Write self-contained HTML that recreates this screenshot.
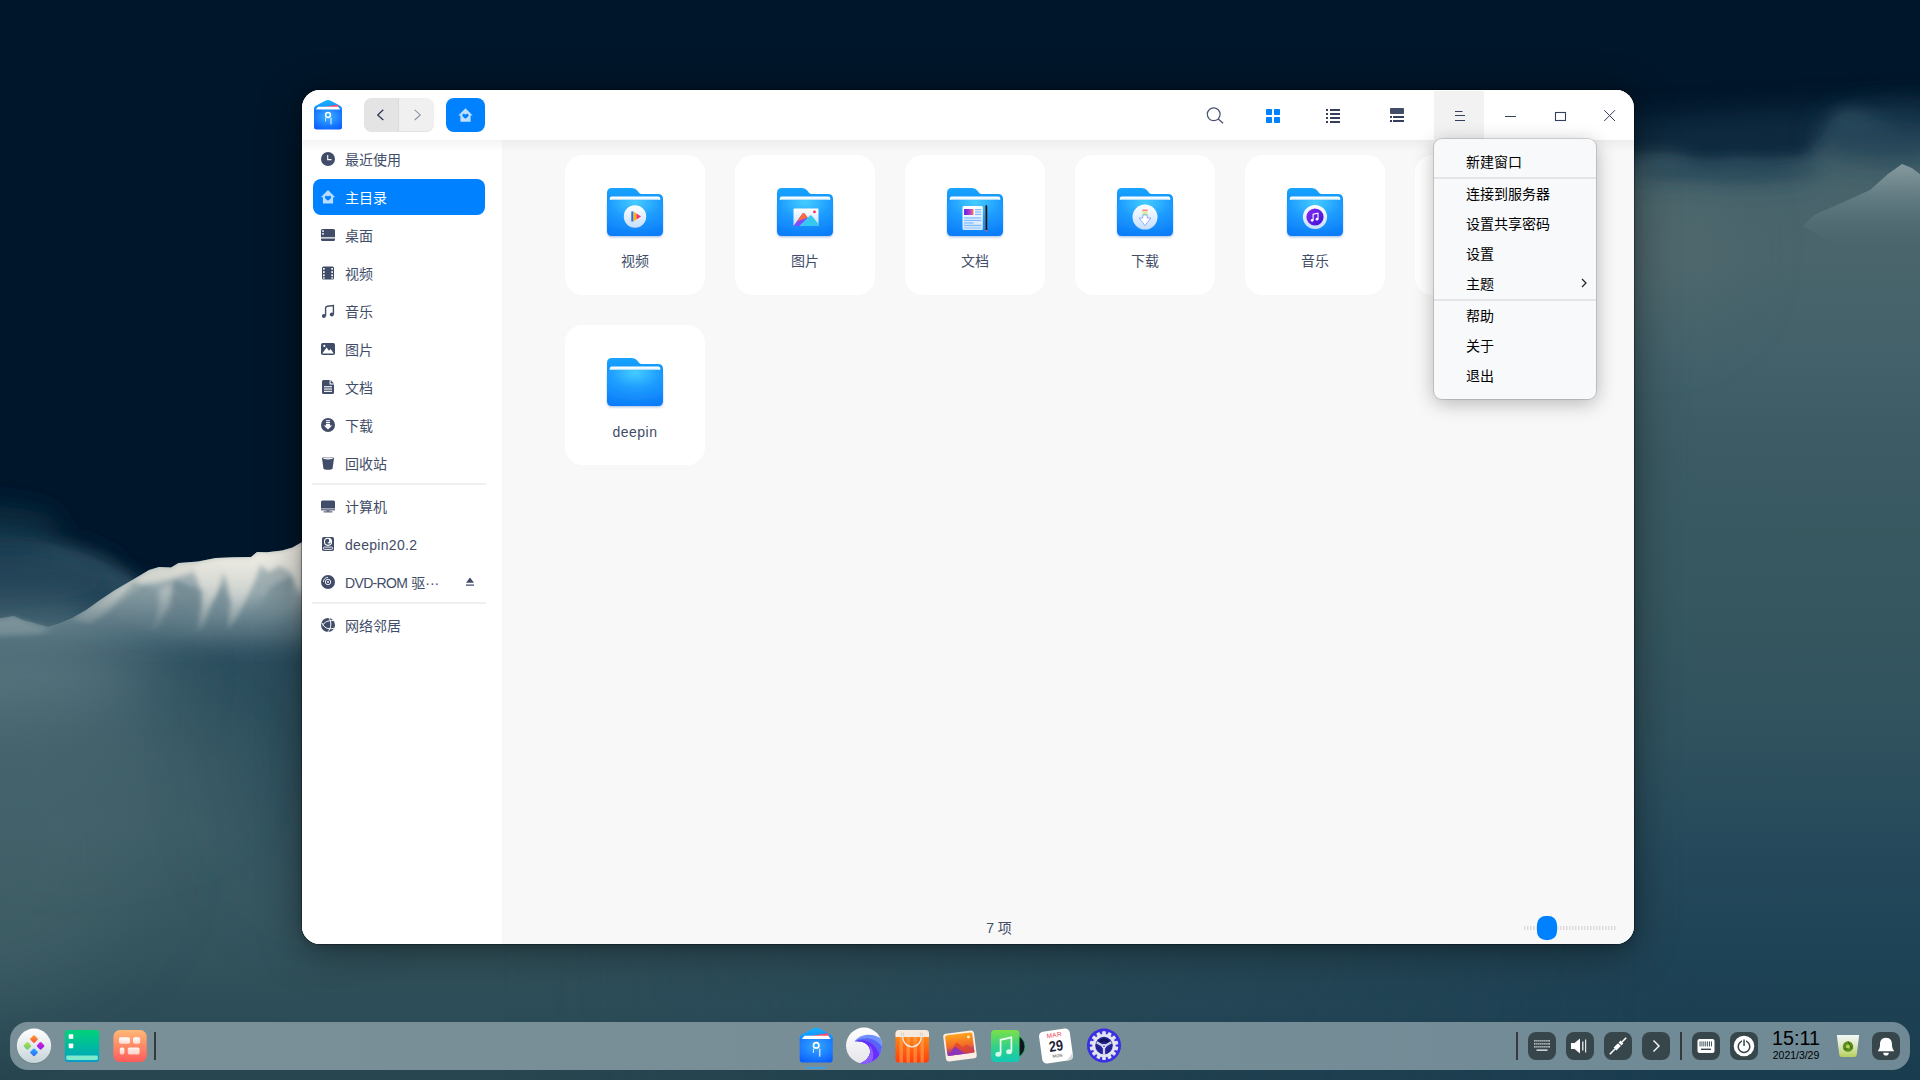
<!DOCTYPE html>
<html lang="zh-CN">
<head>
<meta charset="utf-8">
<title>文件管理器</title>
<style>
*{box-sizing:border-box;margin:0;padding:0}
html,body{width:1920px;height:1080px;overflow:hidden;background:#01152b}
body{font-family:"Liberation Sans","Noto Sans CJK SC",sans-serif;font-size:14px;color:#414d68;position:relative}
#wall{position:absolute;left:0;top:0;width:1920px;height:1080px}
#win{position:absolute;left:302px;top:90px;width:1332px;height:854px;border-radius:18px;background:#f8f8f8;overflow:hidden;}
#winshadow{position:absolute;left:302px;top:90px;width:1332px;height:854px;border-radius:18px;box-shadow:0 8px 44px rgba(0,0,0,.42),0 2px 10px rgba(0,0,0,.18),0 0 0 1px rgba(0,0,0,.3)}
#win:after{content:"";position:absolute;left:0;top:0;width:1332px;height:854px;border-radius:18px;border:1px solid rgba(255,255,255,.95);pointer-events:none}
#title{position:absolute;left:0;top:0;width:1332px;height:50px;background:#fff}
#side{position:absolute;left:0;top:50px;width:200px;height:804px;background:#fff}
#main{position:absolute;left:200px;top:50px;width:1132px;height:804px;background:#f8f8f8}
#topshade{position:absolute;left:0;top:50px;width:1332px;height:12px;background:linear-gradient(rgba(0,0,0,.045),rgba(0,0,0,0));pointer-events:none}
.abs{position:absolute}
/* sidebar */
.it{position:absolute;left:11px;width:172px;height:36px;border-radius:8px;line-height:38px;padding-left:32px;white-space:nowrap;font-size:14px}
.it svg{position:absolute;left:7px;top:10px;width:16px;height:16px}
.it.sel{background:#0081ff;color:#fff}
.sep{position:absolute;left:10px;width:174px;height:2px;background:#efefef}
/* cards */
.card{position:absolute;width:140px;height:140px;border-radius:18px;background:#fff}
.card .fold{position:absolute;left:40px;top:31px;width:60px;height:54px}
.card .nm{position:absolute;left:0;width:140px;top:95px;height:22px;line-height:22px;text-align:center;font-size:14px;color:#414d68}
/* menu */
#menu{position:absolute;left:1434px;top:139px;width:162px;height:260px;border-radius:8px;background:#f8f9fb;box-shadow:0 4px 20px rgba(0,0,0,.28),0 0 0 1px rgba(0,0,0,.13);padding-top:8px;color:#000}
#menu .mi{height:30px;line-height:30px;padding-left:32px;font-size:14px;position:relative}
#menu .ms{height:2px;background:#e4e5e8}
/* dock */
#dock{position:absolute;left:10px;top:1022px;width:1900px;height:48px;border-radius:18px;background:linear-gradient(90deg,#7a9098 0%,#778e97 45%,#6f8a96 100%)}
.tray{position:absolute;top:10px;width:28px;height:28px;border-radius:8px;background:#37464b}
.dsep{position:absolute;top:10px;width:2px;height:28px;background:#333c40}
</style>
</head>
<body>
<svg id="wall" width="1920" height="1080" viewBox="0 0 1920 1080">
<defs>
<linearGradient id="wfl" x1="0" y1="0" x2="0" y2="1080" gradientUnits="userSpaceOnUse">
<stop offset="0" stop-color="#2c4c5a"/><stop offset=".55" stop-color="#37596a"/><stop offset=".593" stop-color="#2d4f5f"/><stop offset=".648" stop-color="#30525f"/><stop offset=".704" stop-color="#375862"/><stop offset=".769" stop-color="#3c5c65"/><stop offset=".833" stop-color="#385861"/><stop offset=".889" stop-color="#32525c"/><stop offset=".944" stop-color="#2c4c57"/><stop offset="1" stop-color="#27454f"/>
</linearGradient>
<linearGradient id="wfr" x1="0" y1="0" x2="0" y2="1080" gradientUnits="userSpaceOnUse">
<stop offset=".12" stop-color="#47636b"/><stop offset=".24" stop-color="#4a656c"/><stop offset=".33" stop-color="#43616a"/><stop offset=".42" stop-color="#3b5a63"/><stop offset=".56" stop-color="#36575f"/><stop offset=".69" stop-color="#2f515e"/><stop offset=".79" stop-color="#25495b"/><stop offset=".88" stop-color="#1f4356"/><stop offset="1" stop-color="#1a3c4f"/>
</linearGradient>
<linearGradient id="wmx" x1="500" y1="0" x2="1700" y2="0" gradientUnits="userSpaceOnUse">
<stop offset="0" stop-color="#fff" stop-opacity="0"/><stop offset="1" stop-color="#fff" stop-opacity="1"/>
</linearGradient>
<mask id="wmk" maskUnits="userSpaceOnUse" x="0" y="0" width="1920" height="1080"><rect width="1920" height="1080" fill="url(#wmx)"/></mask>
<linearGradient id="wsnow" x1="0" y1="545" x2="0" y2="665" gradientUnits="userSpaceOnUse">
<stop offset="0" stop-color="#c4cccb"/><stop offset=".4" stop-color="#a0b1b5" stop-opacity=".92"/><stop offset=".75" stop-color="#6a8590" stop-opacity=".55"/><stop offset="1" stop-color="#37596a" stop-opacity="0"/>
</linearGradient>
<linearGradient id="wsnowh" x1="90" y1="0" x2="230" y2="0" gradientUnits="userSpaceOnUse">
<stop offset="0" stop-color="#f3f0e6" stop-opacity="0"/><stop offset=".5" stop-color="#f3f0e6" stop-opacity=".85"/><stop offset="1" stop-color="#f6f3ea" stop-opacity="1"/>
</linearGradient>
<linearGradient id="wsnowv" x1="0" y1="545" x2="0" y2="640" gradientUnits="userSpaceOnUse">
<stop offset="0" stop-color="#fff"/><stop offset=".4" stop-color="#fff" stop-opacity=".7"/><stop offset="1" stop-color="#fff" stop-opacity="0"/>
</linearGradient>
<mask id="wmk2" maskUnits="userSpaceOnUse" x="0" y="500" width="320" height="220"><rect x="0" y="500" width="320" height="220" fill="url(#wsnowv)"/></mask>
<linearGradient id="wsnow2" x1="0" y1="160" x2="0" y2="260" gradientUnits="userSpaceOnUse">
<stop offset="0" stop-color="#c2cdce"/><stop offset=".35" stop-color="#7f969d" stop-opacity=".85"/><stop offset="1" stop-color="#4a666f" stop-opacity="0"/>
</linearGradient>
<filter id="wb40" filterUnits="userSpaceOnUse" x="-300" y="-300" width="2600" height="1700"><feGaussianBlur stdDeviation="40"/></filter>
<filter id="wb18" filterUnits="userSpaceOnUse" x="-300" y="-300" width="2600" height="1700"><feGaussianBlur stdDeviation="14"/></filter>
<filter id="wb8" filterUnits="userSpaceOnUse" x="-300" y="-300" width="2600" height="1700"><feGaussianBlur stdDeviation="7"/></filter>
<filter id="wb3" filterUnits="userSpaceOnUse" x="-300" y="-300" width="2600" height="1700"><feGaussianBlur stdDeviation="2.5"/></filter>
<filter id="wb1" filterUnits="userSpaceOnUse" x="-300" y="-300" width="2600" height="1700"><feGaussianBlur stdDeviation=".7"/></filter>
<clipPath id="wcp"><path d="M-5 619 L8 617 L14 616 L22 620 L34 623 L48 627 L60 623 L72 618 L86 610 L100 600 L115 590 L134 579 L149 570 L159 567 L171 567.500 L178.500 563 L198 561.500 L215.500 558 L233 557.300 L251 557 L257 552 L267 552.300 L282 550.400 L292.500 547.400 L303 541.500 L303 720 L-5 720Z"/></clipPath>
</defs>
<rect width="1920" height="1080" fill="url(#wfl)"/>
<rect width="1920" height="1080" fill="url(#wfr)" mask="url(#wmk)"/>
<!-- left light patch -->
<ellipse cx="-30" cy="850" rx="170" ry="150" fill="#44646b" filter="url(#wb40)" opacity=".6"/>
<ellipse cx="320" cy="740" rx="90" ry="170" fill="#27485a" filter="url(#wb40)" opacity=".5"/>
<ellipse cx="1660" cy="250" rx="60" ry="70" fill="#566d70" filter="url(#wb40)" opacity=".5"/>
<!-- sky -->
<path filter="url(#wb8)" d="M-200 -200 L2120 -200 L2120 95 C1960 120 1930 135 1898 128 C1880 120 1860 108 1840 112 C1822 130 1818 150 1800 156 C1776 160 1750 160 1737 157 C1715 162 1700 160 1690 158 C1670 148 1650 150 1600 160 L330 560 L175 612 C120 565 70 520 -200 525Z" fill="#01152b"/>
<!-- bluish transition under sky edge on right -->
<path filter="url(#wb18)" d="M1600 175 C1660 165 1700 180 1740 178 C1780 180 1810 175 1830 150 C1850 130 1880 135 1900 145 L1940 140 L1940 100 L1600 120Z" fill="#1b3d52" opacity=".5"/>
<ellipse cx="1890" cy="135" rx="75" ry="28" fill="#1b3d52" filter="url(#wb18)" opacity=".75"/>
<ellipse cx="1730" cy="172" rx="90" ry="10" fill="#1d3f54" filter="url(#wb8)" opacity=".5"/>
<!-- left dark wispy clouds -->
<g filter="url(#wb18)">
<ellipse cx="10" cy="580" rx="110" ry="36" fill="#1b3e52" opacity=".95"/>
<ellipse cx="130" cy="610" rx="55" ry="20" fill="#12344a" opacity=".9"/>
<ellipse cx="-10" cy="528" rx="70" ry="22" fill="#113247" opacity=".8"/>
</g>
<!-- left mountain -->
<path filter="url(#wb1)" d="M-5 619 L8 617 L14 616 L22 620 L34 623 L48 627 L60 623 L72 618 L86 610 L100 600 L115 590 L134 579 L149 570 L159 567 L171 567.500 L178.500 563 L198 561.500 L215.500 558 L233 557.300 L251 557 L257 552 L267 552.300 L282 550.400 L292.500 547.400 L303 541.500 L303 700 L-5 700Z" fill="url(#wsnow)"/>
<g mask="url(#wmk2)" clip-path="url(#wcp)">
<g filter="url(#wb3)">
<path d="M72 619 L100 600 L134 579 L149 570 L159 567 L171 567.500 L178.500 563 L198 561.500 L194 572 L176 578 L160 582 L146 584 L128 596 L108 612 L90 624Z" fill="#e4e2d8"/>
<path d="M198 561.500 L215.500 558 L223 572 L220 590 L211 606 L203 628 L196 634 L201 606 L199 584 L194 572Z" fill="#efece2"/>
<path d="M215.500 558 L233 557.300 L251 557 L257 552 L264 556 L256 578 L246 600 L236 620 L226 632 L231 604 L227 582 L223 572Z" fill="#f1eee4"/>
<path d="M257 552 L267 552.300 L282 550.400 L292.500 547.400 L303 541.500 L303 596 L297 588 L290 572 L280 566 L268 572 L262 566Z" fill="#f3f0e6"/>
<path d="M160 590 L172 584 L170 604 L158 628 L150 634 L158 608Z" fill="#c9cfcc" opacity=".8"/>
</g></g>
<g mask="url(#wmk2)" clip-path="url(#wcp)"><g filter="url(#wb3)" opacity=".85">
<path d="M134 582 L157 591 L152 634 L106 612Z" fill="#6f8993"/>
<path d="M174 580 L203 591 L196 640 L170 626Z" fill="#5b7783"/>
<path d="M221 584 L228 598 L221 626 L211 612Z" fill="#67828c"/>
<path d="M270 588 L292 576 L294 600 L248 634Z" fill="#6c868f"/>
</g></g>
<path filter="url(#wb3)" d="M-5 621 L14 617.500 L34 624 L48 628 L60 625 L40 634 L-5 636Z" fill="#aab8b8" opacity=".55"/>
<ellipse cx="10" cy="675" rx="150" ry="50" fill="#67838c" filter="url(#wb40)" opacity=".8"/>
<ellipse cx="60" cy="770" rx="160" ry="60" fill="#46656f" filter="url(#wb40)" opacity=".6"/>
<!-- right peak -->
<path filter="url(#wb1)" d="M1803 226 L1814 215 L1848 200 L1870 190 L1888 174 L1902 164 L1912 168 L1925 178 L1925 300 Z" fill="url(#wsnow2)" opacity=".6"/>
</svg>

<div id="winshadow"></div>
<div id="win">
<div id="title"><!--TITLE-->
<svg class="abs" style="left:11px;top:8.600px" width="30" height="32" viewBox="0 0 30 32">
<defs><radialGradient id="ag" cx=".5" cy=".35" r=".75"><stop offset="0" stop-color="#3fb4ff"/><stop offset=".6" stop-color="#1a7dff"/><stop offset="1" stop-color="#0a5cff"/></radialGradient>
<linearGradient id="ag2" x1="0" y1="0" x2="0" y2="1"><stop offset="0" stop-color="#18b2ff"/><stop offset="1" stop-color="#1386ff"/></linearGradient></defs>
<path d="M1 9.500 Q1 7.600 2.800 6.700 L12.200 1.700 Q15 .3 17.800 1.700 L27.200 6.700 Q29 7.600 29 9.500 L29 12 L1 12Z" fill="url(#ag2)"/>
<path d="M3.200 9.400 L23.800 5.800 Q24.800 5.700 25.200 6.600 L26.300 9.400 Z" fill="#ff4a68"/>
<path d="M5 7.800 L25.200 7.800 L27.500 11 L2.600 11Z" fill="#fff"/>
<path d="M1 10.6 L29 10.6 L29 28 Q29 30.5 26.5 30.5 L3.500 30.5 Q1 30.500 1 28Z" fill="url(#ag)"/>
<circle cx="15" cy="16" r="2.4" fill="none" stroke="#fff" stroke-width="1.5"/>
<rect x="12.000" y="18.8" width="1" height="3.6" fill="#fff" opacity=".75"/><rect x="17.200" y="18.800" width="1.600" height="6.600" fill="#fff" opacity=".6"/>
</svg>
<div class="abs" style="left:62px;top:8px;width:70px;height:34px;border-radius:8px;background:#f0f0f0;overflow:hidden;box-shadow:inset 0 -1px 0 rgba(0,0,0,.06)">
<div class="abs" style="left:0;top:0;width:35px;height:34px;background:#e4e4e4;border-right:1px solid #dcdcdc"></div>
<svg class="abs" style="left:0;top:0" width="70" height="34" viewBox="0 0 70 34"><path d="M19.300 11.800 L13.700 16.900 L19.300 22" fill="none" stroke="#2f3a5a" stroke-width="1.300"/><path d="M50.700 11.800 L56.300 16.900 L50.700 22" fill="none" stroke="#8d94a8" stroke-width="1.100"/></svg>
</div>
<div class="abs" style="left:144px;top:8px;width:39px;height:34px;border-radius:8px;background:#0081ff">
<svg class="abs" style="left:10.500px;top:9px" width="17" height="16" viewBox="0 0 17 16"><path d="M8.500 1.200 L15.700 8.400 L13.600 8.400 L13.600 14.800 L3.400 14.800 L3.400 8.400 L1.300 8.400Z M8.500 11.700 C6.400 10.400 5.400 9.300 5.400 8.300 C5.400 6.800 7.300 6.300 8.500 7.700 C9.700 6.300 11.600 6.800 11.600 8.300 C11.600 9.300 10.600 10.400 8.500 11.700Z" fill="#bfdfff" fill-rule="evenodd"/></svg>
</div>
<svg class="abs" style="left:900px;top:14px" width="24" height="24" viewBox="0 0 24 24"><circle cx="11.700" cy="10.300" r="6.400" fill="none" stroke="#4a5570" stroke-width="1.200"/><path d="M16.200 14.900 L21.100 19.300" stroke="#4a5570" stroke-width="1.300" fill="none"/></svg>
<svg class="abs" style="left:964px;top:19px" width="14" height="14" viewBox="0 0 14 14" fill="#0081ff"><rect x="0" y="0" width="6" height="6" rx=".8"/><rect x="8" y="0" width="6" height="6" rx=".8"/><rect x="0" y="8" width="6" height="6" rx=".8"/><rect x="8" y="8" width="6" height="6" rx=".8"/></svg>
<svg class="abs" style="left:1024px;top:19px" width="14" height="14" viewBox="0 0 14 14" fill="#353f5c"><rect x="0" y="0" width="2" height="2"/><rect x="4" y="0" width="10" height="2"/><rect x="0" y="4" width="2" height="2"/><rect x="4" y="4" width="10" height="2"/><rect x="0" y="8" width="2" height="2"/><rect x="4" y="8" width="10" height="2"/><rect x="0" y="12" width="2" height="2"/><rect x="4" y="12" width="10" height="2"/></svg>
<svg class="abs" style="left:1088px;top:18px" width="14" height="14" viewBox="0 0 14 14" fill="#353f5c"><rect x="0" y="0" width="14" height="6" rx="1" fill="#414d68"/><rect x="0" y="8" width="2" height="2"/><rect x="3" y="8" width="11" height="2"/><rect x="0" y="12" width="2" height="2"/><rect x="3" y="12" width="11" height="2"/></svg>
<div class="abs" style="left:1132px;top:1px;width:50px;height:49px;background:#f2f2f2"></div>
<svg class="abs" style="left:1132px;top:0" width="200" height="50" viewBox="0 0 200 50" fill="none" stroke="#35405f" stroke-width="1.100">
<path d="M21 21.500 H28.500 M21 25.500 H31 M21 30.500 H31"/>
<path d="M71 26.500 H82"/>
<rect x="121.500" y="22.500" width="10" height="8"/>
<path d="M170.200 20.200 L181 31 M181 20.200 L170.200 31" stroke-width="1"/>
</svg>
<!--/TITLE--></div>
<div id="side"><!--SIDE--><div class="it" style="top:1px"><svg viewBox="0 0 16 16"><circle cx="8" cy="8" r="7" fill="#414d68"/><path d="M7.700 3.900 V8.600 H11.500" fill="none" stroke="#fff" stroke-width="1.100"/></svg>最近使用</div>
<div class="it sel" style="top:39px"><svg viewBox="0 0 16 16"><path d="M8 1 L15.200 8.200 L13.100 8.200 L13.100 14.600 L2.900 14.600 L2.900 8.200 L.8 8.200Z M8 11.600 C5.900 10.300 4.900 9.200 4.900 8.200 C4.900 6.700 6.800 6.200 8 7.600 C9.200 6.200 11.100 6.700 11.100 8.200 C11.100 9.200 10.100 10.300 8 11.600Z" fill="#b8dbff" fill-rule="evenodd"/></svg>主目录</div>
<div class="it" style="top:77px"><svg viewBox="0 0 16 16"><path d="M2.500 2 H13.500 Q15 2 15 3.500 V10.200 H1 V3.500 Q1 2 2.500 2Z" fill="#414d68"/><path d="M1 11.400 H15 V12.500 Q15 14 13.500 14 H2.500 Q1 14 1 12.500Z" fill="#414d68"/><rect x="2.200" y="3.300" width="1.600" height="1.600" fill="#fff"/><rect x="2.200" y="6" width="1.600" height="1.600" fill="#fff"/></svg>桌面</div>
<div class="it" style="top:115px"><svg viewBox="0 0 16 16"><rect x="2" y="1.500" width="12" height="13" rx="1.600" fill="#414d68"/><g fill="#fff"><rect x="3" y="3" width="1.700" height="1.700"/><rect x="3" y="6.200" width="1.700" height="1.700"/><rect x="3" y="9.400" width="1.700" height="1.700"/><rect x="3" y="12.300" width="1.700" height="1.300"/><rect x="11.300" y="3" width="1.700" height="1.700"/><rect x="11.300" y="6.200" width="1.700" height="1.700"/><rect x="11.300" y="9.400" width="1.700" height="1.700"/><rect x="11.300" y="12.300" width="1.700" height="1.300"/></g></svg>视频</div>
<div class="it" style="top:153px"><svg viewBox="0 0 16 16"><g transform="translate(0 1)"><path d="M5.600 11.800 V4.300 Q5.600 2.600 7.400 2.300 L13.400 1.600 V10.400" fill="none" stroke="#414d68" stroke-width="1.400"/><circle cx="3.900" cy="12" r="2" fill="#414d68"/><circle cx="11.800" cy="10.600" r="2" fill="#414d68"/></g></svg>音乐</div>
<div class="it" style="top:191px"><svg viewBox="0 0 16 16"><rect x="1" y="2" width="14" height="12" rx="1.800" fill="#414d68"/><path d="M2.300 12.500 L6.600 6.600 L9 9.700 L10.600 7.900 L13.800 12.500Z" fill="#fff"/><circle cx="4.300" cy="4.900" r="1.100" fill="#fff"/></svg>图片</div>
<div class="it" style="top:229px"><svg viewBox="0 0 16 16"><path d="M3.500 1 H9.600 V5.400 H14 V13.500 Q14 15 12.500 15 H3.500 Q2 15 2 13.500 V2.500 Q2 1 3.500 1Z M10.600 1 L14 4.400 H10.600Z" fill="#414d68"/><g fill="#fff"><rect x="4" y="7.200" width="8" height="1.100"/><rect x="4" y="9.500" width="8" height="1.100"/><rect x="4" y="11.800" width="8" height="1.100"/></g></svg>文档</div>
<div class="it" style="top:267px"><svg viewBox="0 0 16 16"><circle cx="8" cy="8" r="7" fill="#414d68"/><g fill="#fff"><rect x="6" y="3.200" width="4" height="1"/><rect x="6" y="5" width="4" height="1"/><path d="M6 6.800 H10 V8.400 H12.200 L8 12.400 L3.800 8.400 H6Z"/></g></svg>下载</div>
<div class="it" style="top:305px"><svg viewBox="0 0 16 16"><path d="M2 3.200 C2 1.500 14 1.500 14 3.200 L12.600 13.400 C12.400 15.300 3.600 15.300 3.400 13.400Z" fill="#414d68"/><ellipse cx="8" cy="3.300" rx="5" ry="1.100" fill="#fff" opacity=".9"/></svg>回收站</div>
<div class="it" style="top:348px"><svg viewBox="0 0 16 16"><path d="M2.500 2.500 H13.500 Q15 2.500 15 4 V10.500 H1 V4 Q1 2.500 2.500 2.500Z" fill="#414d68"/><rect x="1" y="11.300" width="14" height="1.100" fill="#414d68"/><rect x="6.300" y="12.400" width="3.400" height="1" fill="#414d68"/><rect x="3.600" y="13.400" width="8.800" height="1" fill="#414d68"/></svg>计算机</div>
<div class="it" style="top:386px"><svg viewBox="0 0 16 16"><rect x="2" y="1" width="12" height="14" rx="1.800" fill="#414d68"/><circle cx="8" cy="5.800" r="4.100" fill="#fff"/><path d="M8 2.800 A3 3 0 1 0 11 5.800 A2 2 0 0 1 7.300 6.500 A1.600 1.600 0 0 0 9.100 4.300 A1.800 1.800 0 0 0 8 2.800Z" fill="#414d68"/><rect x="3.400" y="11.100" width="9.200" height="2.300" rx="1.150" fill="none" stroke="#fff" stroke-width=".9"/></svg><span style="letter-spacing:.3px">deepin20.2</span></div>
<div class="it" style="top:424px"><svg viewBox="0 0 16 16"><circle cx="8" cy="8" r="7" fill="#414d68"/><circle cx="8" cy="8" r="2.700" fill="none" stroke="#fff" stroke-width=".9"/><circle cx="8" cy="8" r=".9" fill="#fff"/><path d="M3.400 8 A4.600 4.600 0 0 1 8 3.400" fill="none" stroke="#fff" stroke-width=".9"/></svg><span style="letter-spacing:-.65px">DVD-ROM</span> 驱···<svg style="left:151px;top:11.500px;width:12px;height:12px" viewBox="0 0 12 12"><path d="M6 1.500 L10 6.800 H2Z M2 8.600 H10 V9.800 H2Z" fill="#414d68"/></svg></div>
<div class="it" style="top:467px"><svg viewBox="0 0 16 16"><circle cx="8" cy="8" r="7" fill="#414d68"/><g fill="none" stroke="#fff" stroke-width="1"><path d="M2 5.800 C3.800 10.500 7.500 13 14.200 11.200"/><path d="M2.600 8.300 C4.500 5.200 7.500 3.300 13.600 3.600"/><path d="M9 1 C11.600 5 11.600 10.500 7.800 15"/></g></svg>网络邻居</div>
<div class="sep" style="top:343px"></div><div class="sep" style="top:462px"></div>
<!--/SIDE--></div>
<div id="main"><!--MAIN--><svg width="0" height="0" style="position:absolute"><defs>
<linearGradient id="fb" x1="0" y1="0" x2="0" y2="1"><stop offset="0" stop-color="#18a4ff"/><stop offset="1" stop-color="#0a82f5"/></linearGradient>
<linearGradient id="fw" x1="0" y1="0" x2="0" y2="1"><stop offset="0" stop-color="#ffffff"/><stop offset="1" stop-color="#a8dcff"/></linearGradient>
<radialGradient id="ff" cx=".5" cy=".08" r="1" gradientTransform="translate(0 0) scale(1 .95)"><stop offset="0" stop-color="#45ccff"/><stop offset=".45" stop-color="#1e9dff"/><stop offset="1" stop-color="#0a7cf8"/></radialGradient>
<linearGradient id="fe" x1="0" y1="0" x2="0" y2="1"><stop offset="0" stop-color="#ffffff"/><stop offset="1" stop-color="#c4dffc"/></linearGradient>
<linearGradient id="fd" x1="0" y1="0" x2="0" y2="1"><stop offset="0" stop-color="#ffffff"/><stop offset="1" stop-color="#cfe6ff"/></linearGradient>
<linearGradient id="fdi" x1="0" y1="0" x2="1" y2="0"><stop offset="0" stop-color="#5a1fe0"/><stop offset=".6" stop-color="#b03ad0"/><stop offset="1" stop-color="#ff7a5a"/></linearGradient>
<linearGradient id="fm" x1="0" y1="0" x2="1" y2="1"><stop offset="0" stop-color="#8a2cf0"/><stop offset="1" stop-color="#3a10d8"/></linearGradient>
<filter id="fs" x="-10%" y="-10%" width="120%" height="130%"><feDropShadow dx="0" dy="1.200" stdDeviation="1" flood-color="#0a4fb0" flood-opacity=".35"/></filter>
</defs></svg><div class="card" style="left:63px;top:15px"><svg class="fold" viewBox="0 0 60 54">
<path d="M2 7 Q2 2 7 2 L27 2 Q30.500 2 32.500 4.800 L34 6.800 Q35 8 37 8 L53 8 Q58 8 58 13 L58 30 L2 30Z" fill="url(#fb)"/>
<path d="M6.700 10.600 H53.300 Q55.300 10.600 55.300 12.600 V20 H4.700 V12.600 Q4.700 10.600 6.700 10.600Z" fill="url(#fw)"/>
<path d="M2 18.800 Q2 13.800 7 13.800 L53 13.800 Q58 13.800 58 18.800 L58 45 Q58 50 53 50 L7 50 Q2 50 2 45Z" fill="url(#ff)" filter="url(#fs)"/>
<circle cx="30" cy="30.500" r="11.200" fill="url(#fe)"/><path d="M26.300 25.600 H28.500 V35.400 H26.300Z" fill="#2a6cf2"/><path d="M28.500 25.700 L31.500 27.600 V33.400 L28.500 35.300Z" fill="#ffb400"/><path d="M31.500 27.600 L36 30.500 L31.500 33.400Z" fill="#ff2a68"/>
</svg><div class="nm">视频</div></div>
<div class="card" style="left:233px;top:15px"><svg class="fold" viewBox="0 0 60 54">
<path d="M2 7 Q2 2 7 2 L27 2 Q30.500 2 32.500 4.800 L34 6.800 Q35 8 37 8 L53 8 Q58 8 58 13 L58 30 L2 30Z" fill="url(#fb)"/>
<path d="M6.700 10.600 H53.300 Q55.300 10.600 55.300 12.600 V20 H4.700 V12.600 Q4.700 10.600 6.700 10.600Z" fill="url(#fw)"/>
<path d="M2 18.800 Q2 13.800 7 13.800 L53 13.800 Q58 13.800 58 18.800 L58 45 Q58 50 53 50 L7 50 Q2 50 2 45Z" fill="url(#ff)" filter="url(#fs)"/>
<rect x="18.500" y="22.600" width="25" height="17.400" rx="1" fill="url(#fe)"/><path d="M18.500 40 L27.500 27.600 Q28.500 26.600 29.500 27.600 L33 32.100 L24.500 40Z" fill="#7a4dff"/><path d="M21.800 35.500 L27.500 27.600 Q28.500 26.600 29.500 27.600 L32.600 31.600Z" fill="#ff6a3c"/><path d="M24.500 40 L35 29.600 Q36 28.900 37 29.900 L43.500 38.100 V40Z" fill="#35c9f0"/><circle cx="39.500" cy="25.900" r="1.400" fill="#ff2a55"/>
</svg><div class="nm">图片</div></div>
<div class="card" style="left:403px;top:15px"><svg class="fold" viewBox="0 0 60 54">
<path d="M2 7 Q2 2 7 2 L27 2 Q30.500 2 32.500 4.800 L34 6.800 Q35 8 37 8 L53 8 Q58 8 58 13 L58 30 L2 30Z" fill="url(#fb)"/>
<path d="M6.700 10.600 H53.300 Q55.300 10.600 55.300 12.600 V20 H4.700 V12.600 Q4.700 10.600 6.700 10.600Z" fill="url(#fw)"/>
<path d="M2 18.800 Q2 13.800 7 13.800 L53 13.800 Q58 13.800 58 18.800 L58 45 Q58 50 53 50 L7 50 Q2 50 2 45Z" fill="url(#ff)" filter="url(#fs)"/>
<rect x="17.500" y="19.900" width="20.300" height="24.100" rx="1.500" fill="url(#fd)"/><rect x="19.100" y="23" width="9.400" height="6" fill="url(#fdi)"/><g fill="#7fbcff"><rect x="30" y="23" width="6.300" height="1.300"/><rect x="30" y="25.400" width="6.300" height="1.300"/><rect x="30" y="27.800" width="6.300" height="1.300"/><rect x="19.100" y="31.300" width="17.200" height="1.300"/><rect x="19.100" y="33.800" width="17.200" height="1.300"/><rect x="19.100" y="36.300" width="9.500" height="1.300"/><rect x="19.100" y="38.800" width="17.200" height="1.300"/><rect x="19.100" y="41.300" width="17.200" height="1.300" opacity=".6"/></g><path d="M41.250 18.400 L42.250 20.400 V44.300 H40.250 V20.400Z" fill="#15181f"/><rect x="40.250" y="20.400" width=".7" height="23.900" fill="#7a5a3a"/><rect x="40.250" y="44" width="2" height="1.300" rx=".4" fill="#ff5566"/>
</svg><div class="nm">文档</div></div>
<div class="card" style="left:573px;top:15px"><svg class="fold" viewBox="0 0 60 54">
<path d="M2 7 Q2 2 7 2 L27 2 Q30.500 2 32.500 4.800 L34 6.800 Q35 8 37 8 L53 8 Q58 8 58 13 L58 30 L2 30Z" fill="url(#fb)"/>
<path d="M6.700 10.600 H53.300 Q55.300 10.600 55.300 12.600 V20 H4.700 V12.600 Q4.700 10.600 6.700 10.600Z" fill="url(#fw)"/>
<path d="M2 18.800 Q2 13.800 7 13.800 L53 13.800 Q58 13.800 58 18.800 L58 45 Q58 50 53 50 L7 50 Q2 50 2 45Z" fill="url(#ff)" filter="url(#fs)"/>
<circle cx="30" cy="31.100" r="12.500" fill="url(#fe)"/><rect x="27.200" y="23.600" width="5.600" height="1.600" rx=".8" fill="#ff8a6a"/><rect x="27.600" y="26.200" width="4.800" height="1.600" rx=".6" fill="#d8e86a"/><path d="M27.800 28.800 H32.200 V32 H35.800 L30 39.600 L24.200 32 H27.800Z" fill="#ffffff" stroke="#7a8cf5" stroke-width=".7"/><path d="M27.800 28.800 H32.200" stroke="#6fd98a" stroke-width=".8"/>
</svg><div class="nm">下载</div></div>
<div class="card" style="left:743px;top:15px"><svg class="fold" viewBox="0 0 60 54">
<path d="M2 7 Q2 2 7 2 L27 2 Q30.500 2 32.500 4.800 L34 6.800 Q35 8 37 8 L53 8 Q58 8 58 13 L58 30 L2 30Z" fill="url(#fb)"/>
<path d="M6.700 10.600 H53.300 Q55.300 10.600 55.300 12.600 V20 H4.700 V12.600 Q4.700 10.600 6.700 10.600Z" fill="url(#fw)"/>
<path d="M2 18.800 Q2 13.800 7 13.800 L53 13.800 Q58 13.800 58 18.800 L58 45 Q58 50 53 50 L7 50 Q2 50 2 45Z" fill="url(#ff)" filter="url(#fs)"/>
<circle cx="30" cy="31" r="12.100" fill="url(#fe)"/><circle cx="30" cy="31" r="8.600" fill="url(#fm)"/><path d="M28.100 34.200 V28.200 L33 27.100 V33.100" fill="none" stroke="#fff" stroke-width="1.100"/><circle cx="27.100" cy="34.300" r="1.350" fill="#fff"/><circle cx="32" cy="33.200" r="1.350" fill="#fff"/>
</svg><div class="nm">音乐</div></div>
<div class="card" style="left:913px;top:15px"><svg class="fold" viewBox="0 0 60 54">
<path d="M2 7 Q2 2 7 2 L27 2 Q30.500 2 32.500 4.800 L34 6.800 Q35 8 37 8 L53 8 Q58 8 58 13 L58 30 L2 30Z" fill="url(#fb)"/>
<path d="M6.700 10.600 H53.300 Q55.300 10.600 55.300 12.600 V20 H4.700 V12.600 Q4.700 10.600 6.700 10.600Z" fill="url(#fw)"/>
<path d="M2 18.800 Q2 13.800 7 13.800 L53 13.800 Q58 13.800 58 18.800 L58 45 Q58 50 53 50 L7 50 Q2 50 2 45Z" fill="url(#ff)" filter="url(#fs)"/>
<rect x="19" y="23" width="22" height="15" rx="1.500" fill="#e9f3ff"/>
</svg><div class="nm">桌面</div></div>
<div class="card" style="left:63px;top:185px"><svg class="fold" viewBox="0 0 60 54">
<path d="M2 7 Q2 2 7 2 L27 2 Q30.500 2 32.500 4.800 L34 6.800 Q35 8 37 8 L53 8 Q58 8 58 13 L58 30 L2 30Z" fill="url(#fb)"/>
<path d="M6.700 10.600 H53.300 Q55.300 10.600 55.300 12.600 V20 H4.700 V12.600 Q4.700 10.600 6.700 10.600Z" fill="url(#fw)"/>
<path d="M2 18.800 Q2 13.800 7 13.800 L53 13.800 Q58 13.800 58 18.800 L58 45 Q58 50 53 50 L7 50 Q2 50 2 45Z" fill="url(#ff)" filter="url(#fs)"/>

</svg><div class="nm"><span style="letter-spacing:.5px;position:relative;top:1px">deepin</span></div></div>
<div class="abs" style="left:0;top:775px;width:994px;height:26px;line-height:26px;text-align:center;font-size:14px;color:#414d68">7 项</div>
<svg class="abs" style="left:1018px;top:774px" width="100" height="28" viewBox="0 0 100 28">
<g fill="#dcdcdc"><rect x="4" y="12" width="1.500" height="4"/><rect x="7" y="12" width="1.500" height="4"/><rect x="10" y="12" width="1.500" height="4"/><rect x="13" y="12" width="1.500" height="4"/><rect x="16" y="12" width="1.500" height="4"/><rect x="19" y="12" width="1.500" height="4"/><rect x="22" y="12" width="1.500" height="4"/><rect x="25" y="12" width="1.500" height="4"/><rect x="28" y="12" width="1.500" height="4"/><rect x="31" y="12" width="1.500" height="4"/><rect x="34" y="12" width="1.500" height="4"/><rect x="37" y="12" width="1.500" height="4"/><rect x="40" y="12" width="1.500" height="4"/><rect x="43" y="12" width="1.500" height="4"/><rect x="46" y="12" width="1.500" height="4"/><rect x="49" y="12" width="1.500" height="4"/><rect x="52" y="12" width="1.500" height="4"/><rect x="55" y="12" width="1.500" height="4"/><rect x="58" y="12" width="1.500" height="4"/><rect x="61" y="12" width="1.500" height="4"/><rect x="64" y="12" width="1.500" height="4"/><rect x="67" y="12" width="1.500" height="4"/><rect x="70" y="12" width="1.500" height="4"/><rect x="73" y="12" width="1.500" height="4"/><rect x="76" y="12" width="1.500" height="4"/><rect x="79" y="12" width="1.500" height="4"/><rect x="82" y="12" width="1.500" height="4"/><rect x="85" y="12" width="1.500" height="4"/><rect x="88" y="12" width="1.500" height="4"/><rect x="91" y="12" width="1.500" height="4"/><rect x="94" y="12" width="1.500" height="4"/></g>
<rect x="17" y="2" width="20" height="24" rx="8.500" fill="#0081ff"/></svg>
<!--/MAIN--></div>
<div id="topshade"></div>
</div>
<!--MENU--><div id="menu"><div class="mi">新建窗口</div><div class="ms"></div><div class="mi">连接到服务器</div><div class="mi">设置共享密码</div><div class="mi">设置</div><div class="mi">主题<svg class="abs" style="left:144.800px;top:8.400px" width="10" height="12" viewBox="0 0 10 12"><path d="M3 2 L7 6 L3 10" fill="none" stroke="#222" stroke-width="1.200"/></svg></div><div class="ms"></div><div class="mi">帮助</div><div class="mi">关于</div><div class="mi">退出</div></div><!--/MENU-->
<div id="dock"><!--DOCK--><svg class="abs" style="left:0;top:0" width="1900" height="48" viewBox="10 1022 1900 48">
<defs>
<linearGradient id="dl" x1="0" y1="0" x2="0" y2="1"><stop offset="0" stop-color="#ffffff"/><stop offset="1" stop-color="#c6d4d8"/></linearGradient>
<linearGradient id="dl1" x1="0" y1="0" x2="1" y2="1"><stop offset="0" stop-color="#ffa02f"/><stop offset="1" stop-color="#ff4a3a"/></linearGradient>
<linearGradient id="dl2" x1="0" y1="0" x2="1" y2="1"><stop offset="0" stop-color="#b9dd48"/><stop offset="1" stop-color="#63cb7a"/></linearGradient>
<linearGradient id="dl3" x1="0" y1="0" x2="1" y2="1"><stop offset="0" stop-color="#d61ddf"/><stop offset="1" stop-color="#8c1fe9"/></linearGradient>
<linearGradient id="dl4" x1="0" y1="0" x2="1" y2="1"><stop offset="0" stop-color="#2fa8ff"/><stop offset="1" stop-color="#2b6cf6"/></linearGradient>
<linearGradient id="dt" x1="0" y1="0" x2="0" y2="1"><stop offset="0" stop-color="#00d27a"/><stop offset=".8" stop-color="#00acb4"/><stop offset="1" stop-color="#0a9cc8"/></linearGradient>
<linearGradient id="dm" x1="0" y1="0" x2="0" y2="1"><stop offset="0" stop-color="#ffb877"/><stop offset=".5" stop-color="#ff8a66"/><stop offset="1" stop-color="#ff5b5b"/></linearGradient>
<linearGradient id="dmw" x1="0" y1="0" x2="0" y2="1"><stop offset="0" stop-color="#ffffff"/><stop offset="1" stop-color="#ffd9d2"/></linearGradient>
<radialGradient id="dfm" cx=".5" cy=".3" r=".8"><stop offset="0" stop-color="#35a8ff"/><stop offset=".6" stop-color="#1a7dff"/><stop offset="1" stop-color="#0a5cff"/></radialGradient>
<linearGradient id="dfm2" x1="0" y1="0" x2="0" y2="1"><stop offset="0" stop-color="#18b2ff"/><stop offset="1" stop-color="#1386ff"/></linearGradient>
<linearGradient id="dbr" x1="0" y1="0" x2="0" y2="1"><stop offset="0" stop-color="#ffffff"/><stop offset="1" stop-color="#e4e4ea"/></linearGradient>
<linearGradient id="dbr1" x1="0" y1="0" x2="1" y2="1"><stop offset="0" stop-color="#7a5cff"/><stop offset="1" stop-color="#5a2df0"/></linearGradient>
<linearGradient id="dbr2" x1="0" y1="0" x2="1" y2="0"><stop offset="0" stop-color="#5a66f5"/><stop offset="1" stop-color="#4aa2ff"/></linearGradient>
<linearGradient id="dst" x1="0" y1="0" x2="0" y2="1"><stop offset="0" stop-color="#ff9a1a"/><stop offset="1" stop-color="#ff3d0a"/></linearGradient>
<linearGradient id="dim" x1="0" y1="0" x2="0" y2="1"><stop offset="0" stop-color="#ffa41c"/><stop offset=".6" stop-color="#f0682a"/><stop offset="1" stop-color="#6a2fd0"/></linearGradient>
<linearGradient id="dmu" x1="0" y1="0" x2="0" y2="1"><stop offset="0" stop-color="#7be04a"/><stop offset=".55" stop-color="#2fd08a"/><stop offset="1" stop-color="#12c9b4"/></linearGradient>
<linearGradient id="dtr" x1="0" y1="0" x2="0" y2="1"><stop offset="0" stop-color="#f4f8f6"/><stop offset=".45" stop-color="#dfe9c8"/><stop offset="1" stop-color="#b6cf5a"/></linearGradient>
<radialGradient id="dse" cx=".5" cy=".5" r=".5"><stop offset="0" stop-color="#6f7890"/><stop offset=".75" stop-color="#4a4fae"/><stop offset="1" stop-color="#2a22d8"/></radialGradient>
</defs>
<circle cx="34" cy="1046.6" r="17.3" fill="#4e636b" opacity=".35"/><circle cx="34" cy="1045.8" r="17.2" fill="url(#dl)"/><rect x="30.96" y="1036.16" width="6.08" height="6.08" rx="1.3" fill="url(#dl1)" transform="rotate(45 34 1039.2)"/><rect x="24.36" y="1042.76" width="6.08" height="6.08" rx="1.3" fill="url(#dl2)" transform="rotate(45 27.4 1045.8)"/><rect x="37.56" y="1042.76" width="6.08" height="6.08" rx="1.3" fill="url(#dl3)" transform="rotate(45 40.6 1045.8)"/><rect x="30.96" y="1049.36" width="6.08" height="6.08" rx="1.3" fill="url(#dl4)" transform="rotate(45 34 1052.4)"/><rect x="64.8" y="1030" width="34.4" height="32" rx="3" fill="url(#dt)"/><rect x="68.7" y="1034.2" width="4.6" height="4.6" rx=".6" fill="#fff"/><rect x="68.700" y="1043.600" width="4.600" height="4.600" rx=".6" fill="#fff"/><rect x="66.200" y="1055.600" width="31.600" height="4.400" rx="1.400" fill="#7eeacb"/><rect x="113.400" y="1030" width="33.300" height="32" rx="6.500" fill="url(#dm)"/><g fill="url(#dmw)"><rect x="119" y="1037.200" width="11" height="6.500" rx="1.600"/><rect x="133" y="1037.200" width="7.200" height="6.500" rx="1.600"/><rect x="119.800" y="1047.600" width="4.600" height="6.800" rx="1.600" opacity=".9"/><rect x="127.800" y="1047.600" width="11.800" height="6.800" rx="1.600" opacity=".9"/></g><rect x="154" y="1032" width="2" height="28" fill="#333a3e"/><g transform="translate(798.500 1026.500) scale(1.180)">
<path d="M1 9.500 Q1 7.600 2.800 6.700 L12.200 1.700 Q15 .3 17.800 1.700 L27.200 6.700 Q29 7.600 29 9.500 L29 12 L1 12Z" fill="url(#dfm2)"/>
<path d="M3.200 9.400 L23.800 5.800 Q24.800 5.700 25.200 6.600 L26.300 9.400 Z" fill="#ff4a68"/>
<path d="M5 7.800 L25.200 7.800 L27.500 11 L2.600 11Z" fill="#fff"/>
<path d="M1 10.600 L29 10.600 L29 28 Q29 30.500 26.500 30.500 L3.500 30.500 Q1 30.500 1 28Z" fill="url(#dfm)"/>
<circle cx="15" cy="16" r="2.300" fill="none" stroke="#fff" stroke-width="1.400"/>
<rect x="12.200" y="18.800" width=".9" height="3.600" fill="#fff" opacity=".8"/><rect x="17.300" y="18.800" width="1.300" height="6.800" fill="#fff" opacity=".7"/></g>
<rect x="806" y="1067" width="20" height="1.500" rx=".75" fill="#2aa4ff" opacity=".9"/>
<circle cx="864" cy="1045.600" r="18" fill="url(#dbr)"/>
<clipPath id="dbc"><circle cx="864" cy="1045.600" r="18"/></clipPath>
<g clip-path="url(#dbc)">
<path d="M854.500 1041.500 C860 1033.500 874 1031.500 884 1041 L884 1070 L858 1070 L858 1064 C866 1062 871 1056 870 1050 C869 1044 862 1040.500 854.500 1041.500Z" fill="#6f92ff"/>
<path d="M854.500 1041.500 C864 1036 877 1037 884 1050 L884 1070 L858 1070 L858 1064 C866 1062 871 1056 870 1050 C869 1044 862 1040.500 854.500 1041.500Z" fill="#5a63f6"/>
<path d="M854.500 1041.500 C866 1037.500 877 1044 880.500 1058 L878 1070 L858 1070 L858 1064 C866 1062 871 1056 870 1050 C869 1044 862 1040.500 854.500 1041.500Z" fill="#6a2dff"/>
<path d="M870 1050 C871 1056 866 1062 858 1064 L858 1070 L866 1070 C874 1062 876 1052 869 1044.500 C869.600 1046 870 1048 870 1050Z" fill="#8d5cff"/>
</g>
<rect x="895.500" y="1030" width="33.500" height="32.500" rx="3.500" fill="url(#dst)"/>
<path d="M895.500 1037 V1033.500 Q895.500 1030 899 1030 H925.500 Q929 1030 929 1033.500 V1037Z" fill="#f6e9df"/>
<g fill="#ffa85a" opacity=".55"><rect x="899.500" y="1037" width="3.400" height="25.500"/><rect x="906.500" y="1037" width="3.400" height="25.500"/><rect x="913.500" y="1037" width="3.400" height="25.500"/><rect x="920.500" y="1037" width="3.400" height="25.500"/></g>
<path d="M902.500 1034.500 C902.500 1051 921.500 1051 921.500 1034.500" fill="none" stroke="#f3ece6" stroke-width="1.300"/>
<circle cx="902.500" cy="1034.300" r="1.300" fill="none" stroke="#c9c4c0" stroke-width=".7"/><circle cx="921.500" cy="1034.300" r="1.300" fill="none" stroke="#c9c4c0" stroke-width=".7"/>
<g transform="rotate(-7 960 1046)"><rect x="944.500" y="1032" width="31" height="28" rx="3" fill="#fbeee4"/><rect x="946.300" y="1033.800" width="27.400" height="20.500" rx="2" fill="url(#dim)"/>
<path d="M946.300 1054.300 L957 1042 L963 1048 L966.500 1045 L973.700 1052 V1054.300Z" fill="#e0452f" opacity=".85"/><path d="M946.300 1054.300 L955 1046 L964 1054.300Z" fill="#7a2fd8" opacity=".8"/><circle cx="969.500" cy="1038" r="1.500" fill="#fff0b0"/></g>
<circle cx="1013" cy="1046.500" r="12" fill="#10161c"/><circle cx="1013" cy="1046.500" r="12" fill="none" stroke="#22c06a" stroke-width=".8"/>
<rect x="991" y="1030" width="28.500" height="32" rx="4" fill="url(#dmu)"/>
<path d="M1000.600 1054 V1039.800 L1011.400 1037.400 V1051.600" fill="none" stroke="#e9fff4" stroke-width="1.700"/><ellipse cx="998.300" cy="1054.200" rx="2.900" ry="2.500" fill="#d5fbe6"/><ellipse cx="1009.100" cy="1051.800" rx="2.900" ry="2.500" fill="#d5fbe6"/>
<g transform="rotate(-8 1056 1046)"><rect x="1040.500" y="1030" width="31" height="32" rx="4.500" fill="#ffffff"/><path d="M1071.500 1055 L1071.500 1057.500 Q1071.500 1062 1067 1062 L1064.500 1062Z" fill="#d8d8d8"/>
<text x="1055.800" y="1037" font-family="Liberation Sans, sans-serif" font-size="6.500" fill="#ee4455" text-anchor="middle" letter-spacing=".3">MAR</text>
<text x="1056" y="1051" font-family="Liberation Sans, sans-serif" font-size="15" font-weight="bold" fill="#1c2438" text-anchor="middle" textLength="14" lengthAdjust="spacingAndGlyphs">29</text>
<text x="1056" y="1057.300" font-family="Liberation Sans, sans-serif" font-size="4.200" fill="#333" text-anchor="middle">MON</text></g>
<circle cx="1104" cy="1045.600" r="17" fill="#3a30ea"/><circle cx="1104" cy="1045.600" r="17" fill="url(#dse)" opacity=".25"/>
<rect x="1102.200" y="1031.300" width="3.600" height="4.200" rx=".7" fill="#e3e5f2" transform="rotate(0.00 1104 1045.600)"/><rect x="1102.200" y="1031.300" width="3.600" height="4.200" rx=".7" fill="#e3e5f2" transform="rotate(25.71 1104 1045.600)"/><rect x="1102.200" y="1031.300" width="3.600" height="4.200" rx=".7" fill="#e3e5f2" transform="rotate(51.43 1104 1045.600)"/><rect x="1102.200" y="1031.300" width="3.600" height="4.200" rx=".7" fill="#e3e5f2" transform="rotate(77.14 1104 1045.600)"/><rect x="1102.200" y="1031.300" width="3.600" height="4.200" rx=".7" fill="#e3e5f2" transform="rotate(102.86 1104 1045.600)"/><rect x="1102.200" y="1031.300" width="3.600" height="4.200" rx=".7" fill="#e3e5f2" transform="rotate(128.57 1104 1045.600)"/><rect x="1102.200" y="1031.300" width="3.600" height="4.200" rx=".7" fill="#e3e5f2" transform="rotate(154.29 1104 1045.600)"/><rect x="1102.200" y="1031.300" width="3.600" height="4.200" rx=".7" fill="#e3e5f2" transform="rotate(180.00 1104 1045.600)"/><rect x="1102.200" y="1031.300" width="3.600" height="4.200" rx=".7" fill="#e3e5f2" transform="rotate(205.71 1104 1045.600)"/><rect x="1102.200" y="1031.300" width="3.600" height="4.200" rx=".7" fill="#e3e5f2" transform="rotate(231.43 1104 1045.600)"/><rect x="1102.200" y="1031.300" width="3.600" height="4.200" rx=".7" fill="#e3e5f2" transform="rotate(257.14 1104 1045.600)"/><rect x="1102.200" y="1031.300" width="3.600" height="4.200" rx=".7" fill="#e3e5f2" transform="rotate(282.86 1104 1045.600)"/><rect x="1102.200" y="1031.300" width="3.600" height="4.200" rx=".7" fill="#e3e5f2" transform="rotate(308.57 1104 1045.600)"/><rect x="1102.200" y="1031.300" width="3.600" height="4.200" rx=".7" fill="#e3e5f2" transform="rotate(334.29 1104 1045.600)"/>
<circle cx="1104" cy="1045.600" r="11.600" fill="#e3e5f2"/><circle cx="1104" cy="1045.600" r="8.800" fill="#23239a"/>
<path d="M1098.500 1041 A7.500 7.500 0 0 1 1109.500 1041 L1107.500 1043 A4.600 4.600 0 0 0 1100.500 1043Z" fill="#14145a"/>
<g stroke="#cfd2e2" stroke-width="2.300" fill="none"><path d="M1104 1046.500 V1055"/><path d="M1104 1046.500 L1096.600 1042.200"/><path d="M1104 1046.500 L1111.400 1042.200"/></g><circle cx="1104" cy="1046.300" r="2.200" fill="#e3e5f2"/><circle cx="1104" cy="1046.300" r=".8" fill="#23239a"/>
<rect x="1516" y="1032" width="2" height="28" fill="#333a3e"/><rect x="1680" y="1032" width="2" height="28" fill="#333a3e"/><rect x="1528" y="1032" width="28" height="28" rx="8" fill="#37464b"/><rect x="1566" y="1032" width="28" height="28" rx="8" fill="#37464b"/><rect x="1604" y="1032" width="28" height="28" rx="8" fill="#37464b"/><rect x="1642" y="1032" width="28" height="28" rx="8" fill="#37464b"/><rect x="1692" y="1032" width="28" height="28" rx="8" fill="#37464b"/><rect x="1730" y="1032" width="28" height="28" rx="8" fill="#37464b"/><rect x="1872" y="1032" width="28" height="28" rx="8" fill="#37464b"/><g fill="#d9dde0"><rect x="1534" y="1040.200" width="16" height="1.300"/><rect x="1534" y="1043.200" width="16" height="1.300"/><rect x="1534" y="1046.200" width="16" height="1.300"/><rect x="1536.500" y="1049.400" width="11" height="1.500"/></g><g fill="#37464b"><rect x="1535.6" y="1040" width=".6" height="8"/><rect x="1537.6" y="1040" width=".6" height="8"/><rect x="1539.6" y="1040" width=".6" height="8"/><rect x="1541.6" y="1040" width=".6" height="8"/><rect x="1543.6" y="1040" width=".6" height="8"/><rect x="1545.6" y="1040" width=".6" height="8"/><rect x="1547.6" y="1040" width=".6" height="8"/></g><path d="M1571 1043 H1574.500 L1580 1038.500 V1053.500 L1574.500 1049 H1571Z" fill="#fff"/><rect x="1582.200" y="1041.500" width="1.200" height="9" fill="#fff"/><rect x="1585" y="1039.500" width="1.200" height="13" fill="#fff" opacity=".85"/><path d="M1609.800 1054.200 L1615 1049" stroke="#fff" stroke-width="1.600"/><path d="M1613.600 1047.600 L1616.400 1050.400 L1620.800 1046 L1618 1043.200Z" fill="#fff"/><path d="M1618.600 1042.600 L1621.400 1045.400 L1623.400 1043.400 L1620.600 1040.600Z" fill="#fff"/><path d="M1622 1042 L1626.200 1037.800" stroke="#fff" stroke-width="1.600"/><path d="M1653.500 1040.500 L1659 1046 L1653.500 1051.500" fill="none" stroke="#fff" stroke-width="1.400"/><rect x="1697.500" y="1039" width="17" height="14" rx="2" fill="#fff"/><g fill="#37464b"><rect x="1699.6" y="1041.400" width=".9" height="5"/><rect x="1701.5" y="1041.400" width=".9" height="5"/><rect x="1703.4" y="1041.400" width=".9" height="5"/><rect x="1705.3" y="1041.400" width=".9" height="5"/><rect x="1707.2" y="1041.400" width=".9" height="5"/><rect x="1709.1" y="1041.400" width=".9" height="5"/><rect x="1711.0" y="1041.400" width=".9" height="5"/><rect x="1701" y="1048.600" width="10" height="1.400"/></g><circle cx="1744" cy="1046" r="10.300" fill="#fff"/><circle cx="1744" cy="1046.600" r="5.800" fill="none" stroke="#37464b" stroke-width="1.500"/><rect x="1742" y="1038.500" width="4" height="6" fill="#fff"/><rect x="1743.300" y="1039.500" width="1.500" height="6.500" fill="#37464b"/><path d="M1836.800 1035 H1859.200 L1856.700 1055 Q1856.400 1057 1854.400 1057 H1841.600 Q1839.600 1057 1839.300 1055Z" fill="url(#dtr)"/><circle cx="1848" cy="1046.500" r="5.200" fill="#5f8f1e"/><circle cx="1848" cy="1046.500" r="2" fill="#b9d45a"/><path d="M1848 1041.500 L1850 1045 M1843.600 1049 L1847.500 1049 M1852.300 1049 L1850 1045.600" stroke="#3f6d10" stroke-width="1.200"/><path d="M1886 1037.800 C1890.500 1037.800 1892 1041 1892 1044.500 C1892 1048.500 1893.500 1050 1894.300 1051.200 H1877.700 C1878.500 1050 1880 1048.500 1880 1044.500 C1880 1041 1881.500 1037.800 1886 1037.800Z" fill="#fff"/><path d="M1883.200 1052.800 H1888.800 A2.800 2.800 0 0 1 1883.200 1052.800Z" fill="#fff"/><text x="1796" y="1045.300" font-family="Liberation Sans, Noto Sans CJK SC, sans-serif" font-size="20" fill="#000" text-anchor="middle" textLength="48" lengthAdjust="spacingAndGlyphs">15:11</text><text x="1796" y="1059.300" font-family="Liberation Sans, Noto Sans CJK SC, sans-serif" font-size="11" fill="#000" text-anchor="middle" textLength="46.500" lengthAdjust="spacingAndGlyphs">2021/3/29</text></svg><!--/DOCK--></div>
</body>
</html>
